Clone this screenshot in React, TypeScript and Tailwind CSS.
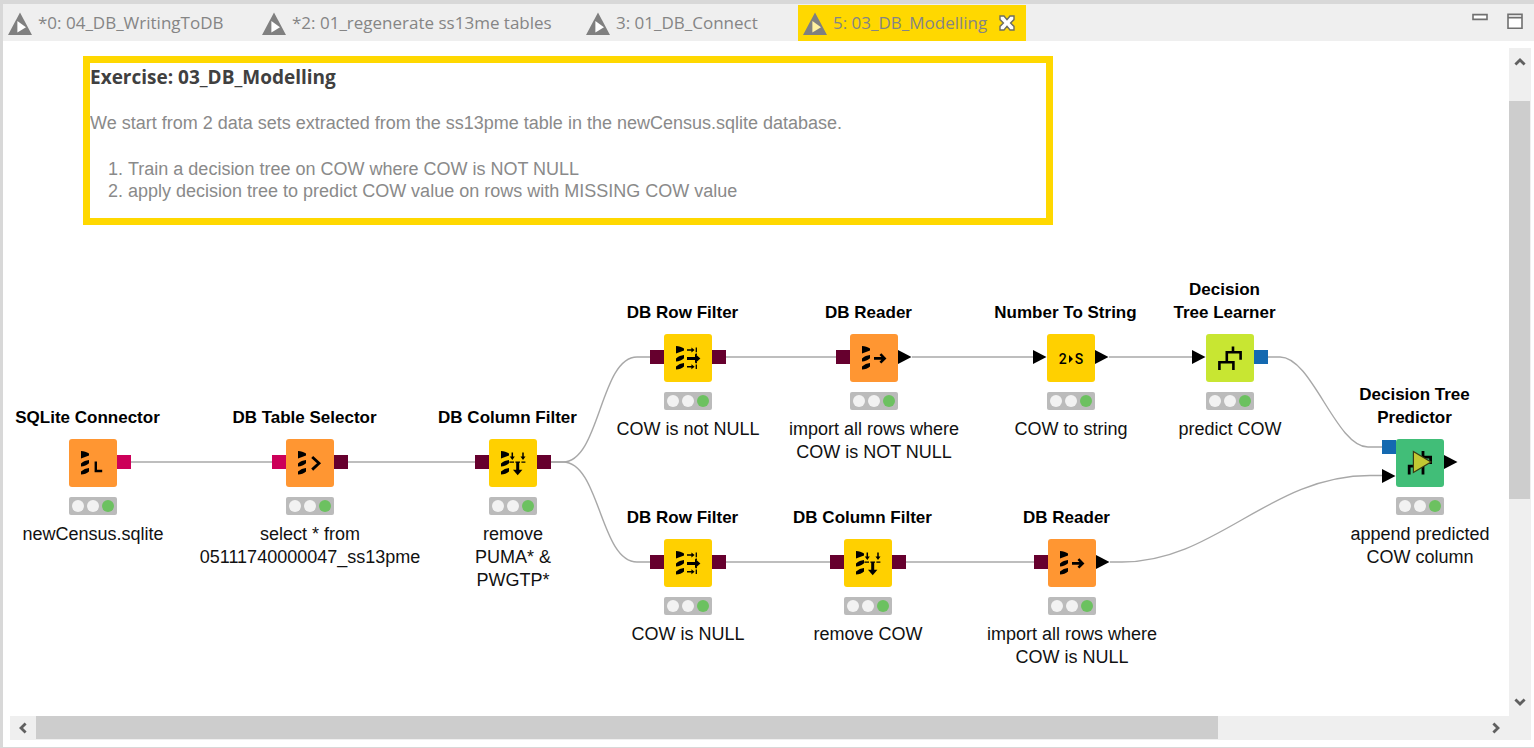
import type { ReactNode } from "react";

type PortKind = "pink" | "wine" | "blue" | "data";
type Port = { kind: PortKind; y?: number };
type WorkflowNode = {
  x: number;
  y: number;
  title: string[];
  note: string[];
  color: string;
  icon: ReactNode;
  inputs?: Port[];
  outputs?: Port[];
};

const portColors = {
  pink: "bg-[#cc0059]",
  wine: "bg-[#66002e]",
  blue: "bg-[#1469b0]",
};

function PortMark({ port, side }: { port: Port; side: "left" | "right" }) {
  const edge = side === "left" ? "right-full" : "left-full";
  const top = port.y ?? 16;
  if (port.kind === "data") {
    return (
      <svg className={`absolute ${edge} h-[14px] w-[14px]`} style={{ top }} viewBox="0 0 14 14" aria-hidden="true">
        <path d="M0 0L13.5 7L0 14Z" fill="#000" />
      </svg>
    );
  }
  return <span className={`absolute ${edge} h-[14px] w-[14px] ${portColors[port.kind]}`} style={{ top }} />;
}

function Glyph({ children }: { children: ReactNode }) {
  return (
    <svg className="h-12 w-12" viewBox="0 0 48 48" fill="none" aria-hidden="true">
      {children}
    </svg>
  );
}

const database = (
  <g fill="#000">
    <path d="M12 12C15 12 17.5 13 20 14.4V16.6L12 19.4Z" />
    <path d="M12 24.4C14.5 22.2 17 21.4 20 21V24.2C18 26.2 15 27.2 12 27.4Z" />
    <path d="M12 32.6C14.5 30.4 17 29.4 20 29V32.6C18 34.6 15 35.4 12 35.6Z" />
  </g>
);

const connectorIcon = (
  <Glyph>
    {database}
    <path d="M26.8 22.6V32H33.2" stroke="#000" strokeWidth="2.4" />
  </Glyph>
);
const selectorIcon = (
  <Glyph>
    {database}
    <path d="M26.2 18L33 24.3L26.2 30.6" stroke="#000" strokeWidth="2.8" />
  </Glyph>
);
const readerIcon = (
  <Glyph>
    {database}
    <path d="M24 24.4H34.5M30.4 20.2L34.6 24.4L30.4 28.6" stroke="#000" strokeWidth="2.6" />
  </Glyph>
);
const rowFilterIcon = (
  <Glyph>
    {database}
    <path d="M23 24.5H34" stroke="#000" strokeWidth="3" />
    <path d="M31 19.8L36.4 24.5L31 29.2Z" fill="#000" />
    <path d="M23 16.1H29M23 32.7H29" stroke="#000" strokeWidth="1.5" />
    <path d="M27.4 13.6L30.6 16.1L27.4 18.6ZM27.4 30.2L30.6 32.7L27.4 35.2Z" fill="#000" />
    <path d="M32.3 13.6V18.2M32.3 30.4V35" stroke="#000" strokeWidth="1.3" />
    <path d="M32.3 19.4V21M32.3 27.8V29.2" stroke="#000" strokeWidth="1.3" />
  </Glyph>
);
const columnFilterIcon = (
  <Glyph>
    {database}
    <path d="M28.7 23V33" stroke="#000" strokeWidth="3" />
    <path d="M24 30.8H33.4L28.7 36.2Z" fill="#000" />
    <path d="M23.3 13.4V19M34 13.4V19" stroke="#000" strokeWidth="1.5" />
    <path d="M20.8 17.6H25.8L23.3 21ZM31.5 17.6H36.5L34 21Z" fill="#000" />
    <path d="M20.4 23.2H25M26.4 23.2H31M32.4 23.2H36.4" stroke="#000" strokeWidth="1.3" />
  </Glyph>
);
const learnerIcon = (
  <Glyph>
    <path
      d="M27 12.6V18.2M20.8 28V18.2H34.6V25.8M13.4 36V28.2H27.4V36"
      stroke="#000"
      strokeWidth="2.6"
    />
  </Glyph>
);
const predictorIcon = (
  <Glyph>
    <path d="M27 12V18.2H34.6V25M13.2 35.4V27.2H27V35.4M19 28V18" stroke="#000" strokeWidth="2.8" />
    <path d="M17.4 12.6L35 23L17.4 33.4Z" fill="#c3c832" stroke="#3a3a14" strokeWidth="1.2" />
  </Glyph>
);
const numberToStringIcon = (
  <span className="flex items-center gap-[2px] pt-[2px] font-[Roboto,sans-serif] text-[14px] leading-4 font-medium text-black">
    2
    <svg className="h-2 w-1" viewBox="0 0 4 8" aria-hidden="true">
      <path d="M0 0L4 4L0 8Z" fill="#000" />
    </svg>
    S
  </span>
);

const yellow = "bg-[#ffd000]";
const orange = "bg-[#ff9632]";

const nodes: WorkflowNode[] = [
  {
    x: 90, y: 398, title: ["SQLite Connector"], note: ["newCensus.sqlite"],
    color: orange, icon: connectorIcon, outputs: [{ kind: "pink" }],
  },
  {
    x: 307, y: 398, title: ["DB Table Selector"], note: ["select * from", "05111740000047_ss13pme"],
    color: orange, icon: selectorIcon, inputs: [{ kind: "pink" }], outputs: [{ kind: "wine" }],
  },
  {
    x: 510, y: 398, title: ["DB Column Filter"], note: ["remove", "PUMA* &", "PWGTP*"],
    color: yellow, icon: columnFilterIcon, inputs: [{ kind: "wine" }], outputs: [{ kind: "wine" }],
  },
  {
    x: 685, y: 293, title: ["DB Row Filter"], note: ["COW is not NULL"],
    color: yellow, icon: rowFilterIcon, inputs: [{ kind: "wine" }], outputs: [{ kind: "wine" }],
  },
  {
    x: 871, y: 293, title: ["DB Reader"], note: ["import all rows where", "COW is NOT NULL"],
    color: orange, icon: readerIcon, inputs: [{ kind: "wine" }], outputs: [{ kind: "data" }],
  },
  {
    x: 1068, y: 293, title: ["Number To String"], note: ["COW to string"],
    color: yellow, icon: numberToStringIcon, inputs: [{ kind: "data" }], outputs: [{ kind: "data" }],
  },
  {
    x: 1227, y: 293, title: ["Decision", "Tree Learner"], note: ["predict COW"],
    color: "bg-[#c8e632]", icon: learnerIcon, inputs: [{ kind: "data" }], outputs: [{ kind: "blue" }],
  },
  {
    x: 1417, y: 398, title: ["Decision Tree", "Predictor"], note: ["append predicted", "COW column"],
    color: "bg-[#41be78]", icon: predictorIcon,
    inputs: [{ kind: "blue", y: 1 }, { kind: "data", y: 30 }], outputs: [{ kind: "data" }],
  },
  {
    x: 685, y: 498, title: ["DB Row Filter"], note: ["COW is NULL"],
    color: yellow, icon: rowFilterIcon, inputs: [{ kind: "wine" }], outputs: [{ kind: "wine" }],
  },
  {
    x: 865, y: 498, title: ["DB Column Filter"], note: ["remove COW"],
    color: yellow, icon: columnFilterIcon, inputs: [{ kind: "wine" }], outputs: [{ kind: "wine" }],
  },
  {
    x: 1069, y: 498, title: ["DB Reader"], note: ["import all rows where", "COW is NULL"],
    color: orange, icon: readerIcon, inputs: [{ kind: "wine" }], outputs: [{ kind: "data" }],
  },
];

const edges = [
  "M128 421H269",
  "M345 421H472",
  "M548 421H560C597 421 597 316 634 316H648",
  "M548 421H560C597 421 597 521 634 521H648",
  "M723 316H833",
  "M909 316H1030",
  "M1106 316H1189",
  "M1265 316H1277C1309 316 1333 406 1365 406H1380",
  "M723 521H827",
  "M903 521H1031",
  "M1107 521H1119C1213 521 1267 434.5 1367 434.5H1380",
];

function NodeView({ node }: { node: WorkflowNode }) {
  return (
    <section className="absolute flex w-60 flex-col items-center" style={{ left: node.x - 120, top: node.y - 56 }}>
      <h2 className="flex h-[46px] flex-col justify-end pr-[11px] text-center text-[17px] leading-[23px] font-bold whitespace-nowrap text-black">
        {node.title.map((line) => (
          <span key={line}>{line}</span>
        ))}
      </h2>
      <div className={`relative mt-[10px] flex h-12 w-12 items-center justify-center rounded-[3px] ${node.color}`}>
        {node.inputs?.map((p, i) => <PortMark key={i} port={p} side="left" />)}
        {node.icon}
        {node.outputs?.map((p, i) => <PortMark key={i} port={p} side="right" />)}
      </div>
      <div className="mt-[10px] flex h-[18px] w-12 items-center justify-center gap-[3px] rounded-[2px] bg-[#bbb]">
        <span className="h-3 w-3 rounded-full bg-[#f2f2f2]" />
        <span className="h-3 w-3 rounded-full bg-[#f2f2f2]" />
        <span className="h-3 w-3 rounded-full bg-[#6cc160]" />
      </div>
      <p className="mt-2 flex flex-col text-center text-lg leading-[23px] whitespace-nowrap text-[#111]">
        {node.note.map((line) => (
          <span key={line}>{line}</span>
        ))}
      </p>
    </section>
  );
}

function TabIcon({ active }: { active?: boolean }) {
  return (
    <svg className="h-[23px] w-6 shrink-0" viewBox="0 0 24 23" aria-hidden="true">
      <path d="M12 0.5L24 23H0Z" fill="#808080" />
      <path d="M9.4 9L18 15.2L9.4 20.6Z" fill={active ? "#fff0a0" : "#fff"} />
    </svg>
  );
}

const tabs = [
  { label: "*0: 04_DB_WritingToDB", width: "w-[254px]" },
  { label: "*2: 01_regenerate ss13me tables", width: "w-[324px]" },
  { label: "3: 01_DB_Connect", width: "w-[217px]" },
  { label: "5: 03_DB_Modelling", width: "w-[228px]", active: true },
];

function Chevron({ d, label, className }: { d: string; label: string; className: string }) {
  return (
    <button type="button" aria-label={label} className={`flex shrink-0 items-center justify-center ${className}`}>
      <svg className="h-3 w-3" viewBox="0 0 12 12" fill="none" aria-hidden="true">
        <path d={d} stroke="#606060" strokeWidth="2.8" />
      </svg>
    </button>
  );
}

export default function App() {
  return (
    <div className="flex min-h-screen flex-col border-t-4 border-b border-l-[3px] border-[#d8d8d8] bg-white font-['Liberation_Sans',Arial,sans-serif]">
      <header className="flex h-[37px] items-stretch bg-[#efefef] pt-px">
        <nav className="flex min-w-0 flex-1" aria-label="Open workflows">
          {tabs.map((tab) => (
            <div
              key={tab.label}
              className={`flex items-center gap-3 pl-[5px] ${tab.width} ${tab.active ? "bg-[#ffd800]" : ""}`}
            >
              <button
                type="button"
                className="flex items-center gap-[6px] font-['Open_Sans','Noto_Sans',sans-serif] text-[17px] leading-6 whitespace-nowrap text-[#858585]"
              >
                <TabIcon active={tab.active} />
                {tab.label}
              </button>
              {tab.active && (
                <button type="button" aria-label="Close tab">
                  <svg className="h-4 w-4" viewBox="0 0 16 16" aria-hidden="true">
                    <path
                      d="M1 1H5L8 4.6L11 1H15V4.6L11.6 8L15 11.4V15H11L8 11.4L5 15H1V11.4L4.4 8L1 4.6Z"
                      fill="#fff"
                      stroke="#6e6e60"
                      strokeWidth="1.4"
                    />
                  </svg>
                </button>
              )}
            </div>
          ))}
        </nav>
        <div className="flex items-start gap-[19px] pt-2 pr-[11px]">
          <button type="button" aria-label="Minimize">
            <svg className="h-4 w-4" viewBox="0 0 16 16" fill="#fff" stroke="#707070" aria-hidden="true">
              <path d="M1 1.6H15V6.4H1Z" strokeWidth="1.6" />
            </svg>
          </button>
          <button type="button" aria-label="Maximize">
            <svg className="h-4 w-4" viewBox="0 0 16 16" fill="#fff" stroke="#707070" aria-hidden="true">
              <path d="M1 1.4H15V15.2H1ZM1 4.6H15" strokeWidth="1.6" />
            </svg>
          </button>
        </div>
      </header>

      <div className="flex flex-1 pr-[3px]">
        <main className="relative min-h-[640px] min-w-0 flex-1 overflow-hidden">
          <svg className="absolute inset-0 h-full w-full" fill="none" stroke="#a8a8a8" strokeWidth="1.4" aria-hidden="true">
            {edges.map((d) => (
              <path key={d} d={d} />
            ))}
          </svg>
          <article className="absolute top-[15px] left-[80px] h-[169px] w-[970px] border-[7px] border-[#ffd800] pt-[3px] text-lg leading-[22px] whitespace-nowrap text-[#8a8a8a]">
            <h1 className="font-['Open_Sans','Noto_Sans',sans-serif] text-[19px] leading-[22px] font-bold text-[#404040]">
              Exercise: 03_DB_Modelling
            </h1>
            <p className="mt-6">
              We start from 2 data sets extracted from the ss13pme table in the newCensus.sqlite database.
            </p>
            <ol className="mt-6 list-decimal pl-[38px]">
              <li>Train a decision tree on COW where COW is NOT NULL</li>
              <li>apply decision tree to predict COW value on rows with MISSING COW value</li>
            </ol>
          </article>
          {nodes.map((node) => (
            <NodeView key={`${node.x}-${node.y}`} node={node} />
          ))}
        </main>
        <div className="mt-[7px] flex w-[22px] flex-col bg-[#efefef]">
          <Chevron label="Scroll up" d="M1.4 8.6L6 4L10.6 8.6" className="h-[27px]" />
          <div className="grow-[26] basis-0" />
          <div className="mr-px grow-[399] basis-0 bg-[#cdcdcd]" />
          <div className="grow-[190] basis-0" />
          <Chevron label="Scroll down" d="M1.4 3.4L6 8L10.6 3.4" className="h-[27px]" />
        </div>
      </div>

      <div className="mr-[3px] mb-[7px] ml-[7px] flex h-6 bg-[#efefef]">
        <Chevron label="Scroll left" d="M8.6 1.4L4 6L8.6 10.6" className="w-[26px]" />
        <div className="mb-px grow-[1182] basis-0 bg-[#cdcdcd]" />
        <div className="grow-[265] basis-0" />
        <Chevron label="Scroll right" d="M3.4 1.4L8 6L3.4 10.6" className="w-[26px]" />
        <div className="w-[22px]" />
      </div>
    </div>
  );
}
